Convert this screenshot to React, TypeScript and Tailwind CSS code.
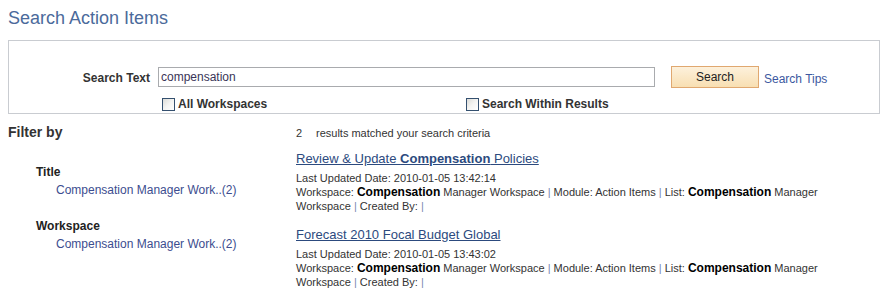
import React from "react";

const Check = () => (
  <span className="inline-block w-[13px] h-[13px] border border-[#34506f] bg-gradient-to-br from-[#dcdcd8] via-[#f4f4f2] to-[#ffffff] mr-[3px]" />
);

const Pipe = () => <span className="text-[#7a86b0]">|</span>;

function Result({ title, date }: { title: React.ReactNode; date: string }) {
  return (
    <div>
      <div className="text-[13px] leading-[17px] text-[#2c4a7e] underline">{title}</div>
      <div className="mt-[4px] text-[11px] leading-[14px] text-[#333]">Last Updated Date: {date}</div>
      <div className="text-[11px] leading-[14px] text-[#333] w-[540px]">
        Workspace: <b className="text-[12px] leading-[14px] text-black">Compensation</b> Manager Workspace <Pipe /> Module: Action Items <Pipe /> List:{" "}
        <b className="text-[12px] leading-[14px] text-black">Compensation</b> Manager Workspace <Pipe /> Created By: <Pipe />
      </div>
    </div>
  );
}

export default function App() {
  return (
    <div className="w-[888px] h-[304px] bg-white overflow-hidden" style={{ fontFamily: '"Liberation Sans", Arial, sans-serif' }}>
      <div className="px-[8px] pt-[6px] text-[18px] leading-[24px] text-[#4b6a9b]">Search Action Items</div>
      <div className="mx-[8px] mt-[10px] h-[74px] border border-[#c9ccd1]">
        <div className="flex items-center pt-[24px]">
          <div className="w-[141px] text-right text-[12px] font-bold text-[#333] mt-[2px]">Search Text</div>
          <div className="ml-[8px] w-[497px] h-[20px] border border-[#a9abae] flex items-center px-[2px] text-[12px] text-[#3a3458]">compensation</div>
          <div className="ml-[16px] w-[88px] h-[22px] border border-[#e0a870] bg-gradient-to-b from-[#fdf1dc] to-[#f8dfb2] flex items-center justify-center text-[12px] text-[#222]">Search</div>
          <div className="ml-[5px] mt-[5px] text-[12px] text-[#3c58a0]">Search Tips</div>
        </div>
        <div className="flex items-center pl-[153px] mt-[7px] text-[12px] font-bold text-[#333]">
          <div className="w-[304px] flex items-center"><Check />All Workspaces</div>
          <div className="flex items-center"><Check />Search Within Results</div>
        </div>
      </div>
      <div className="flex px-[8px] mt-[9px]">
        <div className="w-[288px]">
          <div className="text-[14px] leading-[18px] font-bold text-[#333]">Filter by</div>
          <div className="pl-[28px] mt-[23px]">
            <div className="text-[12px] leading-[16px] font-bold text-[#222]">Title</div>
            <div className="pl-[20px] mt-[2px] text-[12px] leading-[16px] text-[#3c4d8f]">Compensation Manager Work..(2)</div>
            <div className="mt-[20px] text-[12px] leading-[16px] font-bold text-[#222]">Workspace</div>
            <div className="pl-[20px] mt-[2px] text-[12px] leading-[16px] text-[#3c4d8f]">Compensation Manager Work..(2)</div>
          </div>
        </div>
        <div className="pt-[3px]">
          <div className="flex text-[11px] leading-[14px] text-[#333]">
            <span className="w-[20px]">2</span>
            <span>results matched your search criteria</span>
          </div>
          <div className="mt-[10px]">
            <Result
              title={<>Review &amp; Update <b>Compensation</b> Policies</>}
              date="2010-01-05 13:42:14"
            />
          </div>
          <div className="mt-[13px]">
            <Result title={<>Forecast 2010 Focal Budget Global</>} date="2010-01-05 13:43:02" />
          </div>
        </div>
      </div>
    </div>
  );
}
